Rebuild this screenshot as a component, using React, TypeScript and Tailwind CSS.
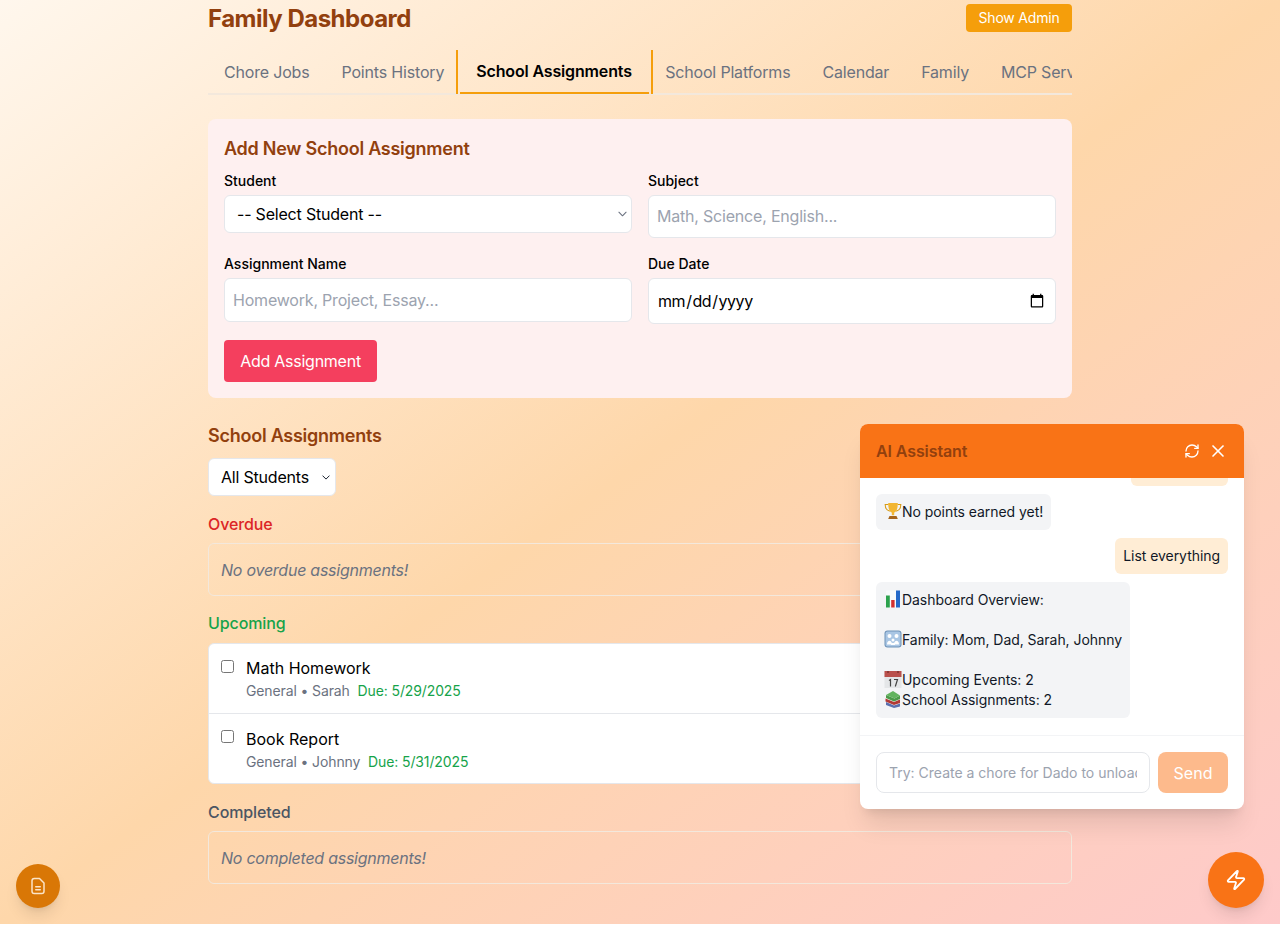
import { RefreshCw, X, Zap } from "lucide-react";

function Trophy() {
  return (
    <svg viewBox="0 0 18 18" className="w-[18px] h-[18px] shrink-0 -translate-y-[1px]">
      <path d="M4.5 2.5H1.2c0 3.6 1.5 6 4.6 6.6M13.5 2.5h3.3c0 3.6-1.5 6-4.6 6.6" fill="none" stroke="#d69a16" strokeWidth="1.1" />
      <path d="M4.2 1h9.6c0 4-.6 8.4-3.6 9.6v2.6h-2.400v-2.600C4.800 9.400 4.200 5 4.200 1z" fill="#f2b632" />
      <path d="M5.500 14h7l1.300 3H4.200z" fill="#a5641c" />
    </svg>
  );
}
function Chart() {
  return (
    <svg viewBox="0 0 18 18" className="w-[18px] h-[18px] shrink-0 -translate-y-[1px]">
      <rect x="2" y="0.500" width="14" height="17" fill="#f8fafb" />
      <rect x="2" y="5.500" width="3.800" height="12" fill="#2ca24d" />
      <rect x="7.200" y="10" width="3.400" height="7.500" fill="#d3302f" />
      <rect x="12" y="0.500" width="4" height="17" fill="#2469c9" />
    </svg>
  );
}
function Family() {
  return (
    <svg viewBox="0 0 18 18" className="w-[18px] h-[18px] shrink-0 -translate-y-[1px]">
      <rect x="0.500" y="0.500" width="17" height="17" rx="3" fill="#6f93b8" />
      <rect x="1.500" y="1.500" width="15" height="15" rx="2" fill="#a9c6e4" />
      <circle cx="5.500" cy="6" r="2" fill="#fff" />
      <circle cx="12.500" cy="6" r="2" fill="#fff" />
      <circle cx="9" cy="10" r="1.500" fill="#fff" />
      <path d="M3 14.500c0-5 5-5 5 0zM10 14.500c0-5 5-5 5 0zM7 15c0-3 4-3 4 0z" fill="#fff" />
    </svg>
  );
}
function CalendarEmoji() {
  return (
    <svg viewBox="0 0 18 18" className="w-[18px] h-[18px] shrink-0 -translate-y-[1px]">
      <rect x="0.500" y="1" width="17" height="17" fill="#e4e6e8" />
      <rect x="0.500" y="1" width="17" height="6" fill="#b9504c" />
      <circle cx="4" cy="2" r="1" fill="#7c3330" />
      <circle cx="14" cy="2" r="1" fill="#7c3330" />
      <path d="M5 10.500l1.500-1v7M10 9.500h3.500l-2.200 7" fill="none" stroke="#444" strokeWidth="1.200" />
    </svg>
  );
}
function Books() {
  return (
    <svg viewBox="0 0 18 18" className="w-[18px] h-[18px] shrink-0 -translate-y-[1px]">
      <path d="M2 12l8 3.500 6-2v3l-6 1.500-8-3z" fill="#5b6fae" />
      <path d="M1.500 8.500l8.500 3.500 6-2.500v3.500l-6 2-8.500-3.500z" fill="#b23a36" />
      <path d="M2 5l8.500 3.500 5.500-3v3.500l-6 2.500L2 8z" fill="#4c9a4a" />
      <path d="M2 5l7-4 7 4.500-5.500 3z" fill="#62b35e" />
    </svg>
  );
}
function Chevron({ className, color }: { className: string; color: string }) {
  return (
    <svg viewBox="0 0 10 6" className={className} fill="none" stroke={color} strokeWidth="1.200" strokeLinecap="round" strokeLinejoin="round">
      <path d="M1 1l4 4 4-4" />
    </svg>
  );
}
function DocIcon() {
  return (
    <svg width="18" height="18" viewBox="0 0 24 24" fill="none" stroke="currentColor" strokeWidth="2" strokeLinecap="round" strokeLinejoin="round">
      <path d="M14 2H7a3 3 0 0 0-3 3v14a3 3 0 0 0 3 3h10a3 3 0 0 0 3-3V8z" />
      <path d="M9 13h6M9 17h6" />
    </svg>
  );
}

const inputBase =
  "w-full bg-white border border-[#e5e7eb] rounded-md text-base tracking-[-0.2px] outline-none placeholder:text-[#9ca3af]";
const tab = "h-[44px] border-b border-[#f3e8dc] pt-[10px]";

export default function App() {
  return (
    <div className="relative h-[924px] overflow-hidden bg-gradient-to-br from-[#fff7ed] via-[#fed7aa] to-[#fecaca] font-['Inter',sans-serif] text-black">
      <div className="w-[864px] mx-auto">
        <div className="flex justify-between items-start pt-[3px] h-[36px]">
          <h1 className="text-2xl leading-8 font-bold tracking-[-0.5px] text-[#92400e]">Family Dashboard</h1>
          <button className="mt-[1px] h-[28px] w-[106px] bg-[#f59e0b] text-white text-sm tracking-[-0.2px] rounded">Show Admin</button>
        </div>

        <div className="mt-[14px] h-[45px] border-b border-[#f3e8dc] flex overflow-hidden text-base tracking-[-0.18px] text-[#6b7280] whitespace-nowrap">
          <div className={`${tab} pl-4 pr-4`}>Chore Jobs</div>
          <div className={`${tab} pl-4 pr-3`}>Points History</div>
          <div className="h-[44px] border-x-2 border-[#f59e0b] px-[2px]">
            <div className="h-[44px] w-[189px] border-b-2 border-[#f59e0b] text-black font-semibold tracking-[-0.15px] pl-4 pt-[9px]">School Assignments</div>
          </div>
          <div className={`${tab} pl-3 pr-4`}>School Platforms</div>
          <div className={`${tab} px-4`}>Calendar</div>
          <div className={`${tab} px-4`}>Family</div>
          <div className={`${tab} px-4`}>MCP Servers</div>
        </div>

        <section className="mt-6 h-[279px] bg-[#fef0f0] rounded-lg p-4">
          <h2 className="text-lg leading-7 font-semibold tracking-[-0.25px] text-[#92400e]">Add New School Assignment</h2>
          <div className="grid grid-cols-2 gap-x-4 mt-2">
            <div>
              <label className="block text-sm leading-5 font-medium mb-1">Student</label>
              <div className="relative">
                <select className={`${inputBase} block appearance-none h-[38px] pl-3`} defaultValue="">
                  <option value="">-- Select Student --</option>
                </select>
                <Chevron className="absolute left-[394px] top-[16px] w-[9px] h-[6px]" color="#6b7280" />
              </div>
            </div>
            <div>
              <label className="block text-sm leading-5 font-medium mb-1">Subject</label>
              <input className={`${inputBase} block h-[43px] px-2 pb-[2px]`} placeholder="Math, Science, English..." />
            </div>
            <div className="mt-4">
              <label className="block text-sm leading-5 font-medium mb-1">Assignment Name</label>
              <input className={`${inputBase} block h-[44px] px-2`} placeholder="Homework, Project, Essay..." />
            </div>
            <div className="mt-4">
              <label className="block text-sm leading-5 font-medium mb-1">Due Date</label>
              <input type="date" className={`${inputBase} block h-[46px] px-2 !tracking-[-0.45px]`} />
            </div>
          </div>
          <button className="mt-4 h-[42px] w-[153px] bg-[#f43f5e] text-white text-base tracking-[-0.25px] rounded">Add Assignment</button>
        </section>

        <h2 className="mt-6 text-lg leading-7 font-semibold tracking-[-0.25px] text-[#92400e]">School Assignments</h2>
        <div className="relative mt-2 w-[128px]">
          <select className={`${inputBase} block appearance-none h-[38px] pl-3`} defaultValue="all">
            <option value="all">All Students</option>
          </select>
          <Chevron className="absolute left-[114px] top-[17px] w-[8px] h-[5px]" color="#111827" />
        </div>

        <h3 className="mt-4 text-base leading-6 font-medium tracking-[-0.1px] text-[#dc2626]">Overdue</h3>
        <div className="mt-[7px] h-[53px] border border-[#f3e8dc] rounded-md px-3 flex items-center italic tracking-[-0.25px] text-[#6b7280]">No overdue assignments!</div>

        <h3 className="mt-[15px] text-base leading-6 font-medium tracking-[-0.1px] text-[#16a34a]">Upcoming</h3>
        <div className="mt-2 h-[141px] bg-white border border-[#e5e7eb] rounded-md">
          <div className="h-[70px] border-b border-[#e5e7eb] flex pl-3">
            <input type="checkbox" className="mt-4 w-[13px] h-[13px]" />
            <div className="ml-3 pt-[12px]">
              <div className="text-base leading-6">Math Homework</div>
              <div className="mt-[1px] text-sm leading-5 tracking-[-0.12px] text-[#6b7280]">
                General • Sarah <span className="ml-1 text-[#16a34a]">Due: 5/29/2025</span>
              </div>
            </div>
          </div>
          <div className="h-[70px] flex pl-3">
            <input type="checkbox" className="mt-4 w-[13px] h-[13px]" />
            <div className="ml-3 pt-[13px]">
              <div className="text-base leading-6">Book Report</div>
              <div className="mt-[1px] text-sm leading-5 tracking-[-0.12px] text-[#6b7280]">
                General • Johnny <span className="ml-1 text-[#16a34a]">Due: 5/31/2025</span>
              </div>
            </div>
          </div>
        </div>

        <h3 className="mt-4 text-base leading-6 font-medium tracking-[-0.1px] text-[#4b5563]">Completed</h3>
        <div className="mt-[7px] h-[53px] border border-[#f3e8dc] rounded-md px-3 flex items-center italic tracking-[-0.25px] text-[#6b7280]">No completed assignments!</div>
      </div>

      <div className="absolute left-[860px] top-[424px] w-[384px] h-[385px] bg-white rounded-lg shadow-xl flex flex-col overflow-hidden">
        <div className="h-[54px] shrink-0 bg-[#f97316] flex items-center justify-between pl-4 pr-4">
          <span className="text-base font-semibold tracking-[-0.1px] text-[#92400e]">AI Assistant</span>
          <div className="flex items-center gap-2 text-white">
            <RefreshCw size={16} />
            <X size={20} />
          </div>
        </div>
        <div className="h-[258px] shrink-0 overflow-hidden px-4 flex flex-col text-sm leading-5 tracking-[-0.05px] text-[#111827] border-b border-[#f3f4f6]">
          <div className="self-end shrink-0 w-[97px] h-[8px] bg-[#ffedd5] rounded-b-md" />
          <div className="mt-2 self-start bg-[#f3f4f6] rounded-md p-2 flex items-center">
            <Trophy />
            No points earned yet!
          </div>
          <div className="mt-2 self-end bg-[#ffedd5] rounded-md p-2">List everything</div>
          <div className="mt-2 self-start bg-[#f3f4f6] rounded-md p-2 w-[254px] whitespace-nowrap">
            <div className="flex items-center h-5"><Chart />Dashboard Overview:</div>
            <div className="h-5" />
            <div className="flex items-center h-5"><Family />Family: Mom, Dad, Sarah, Johnny</div>
            <div className="h-5" />
            <div className="flex items-center h-5"><CalendarEmoji />Upcoming Events: 2</div>
            <div className="flex items-center h-5"><Books />School Assignments: 2</div>
          </div>
        </div>
        <div className="flex gap-2 px-4 pt-4">
          <input className="w-[274px] h-[41px] border border-[#e5e7eb] rounded-lg px-3 text-sm outline-none placeholder:text-[#9ca3af]" placeholder="Try: Create a chore for Dado to unload the dishwasher" />
          <button className="w-[70px] h-[41px] rounded-lg bg-[#fdba8c] text-white text-base">Send</button>
        </div>
      </div>

      <button className="absolute left-[1208px] top-[852px] w-14 h-14 rounded-full bg-[#f97316] shadow-lg text-white flex items-center justify-center">
        <Zap size={22} />
      </button>
      <button className="absolute left-4 top-[864px] w-11 h-11 rounded-full bg-[#d97706] shadow-lg text-[#fbe4c8] flex items-center justify-center">
        <DocIcon />
      </button>
    </div>
  );
}
